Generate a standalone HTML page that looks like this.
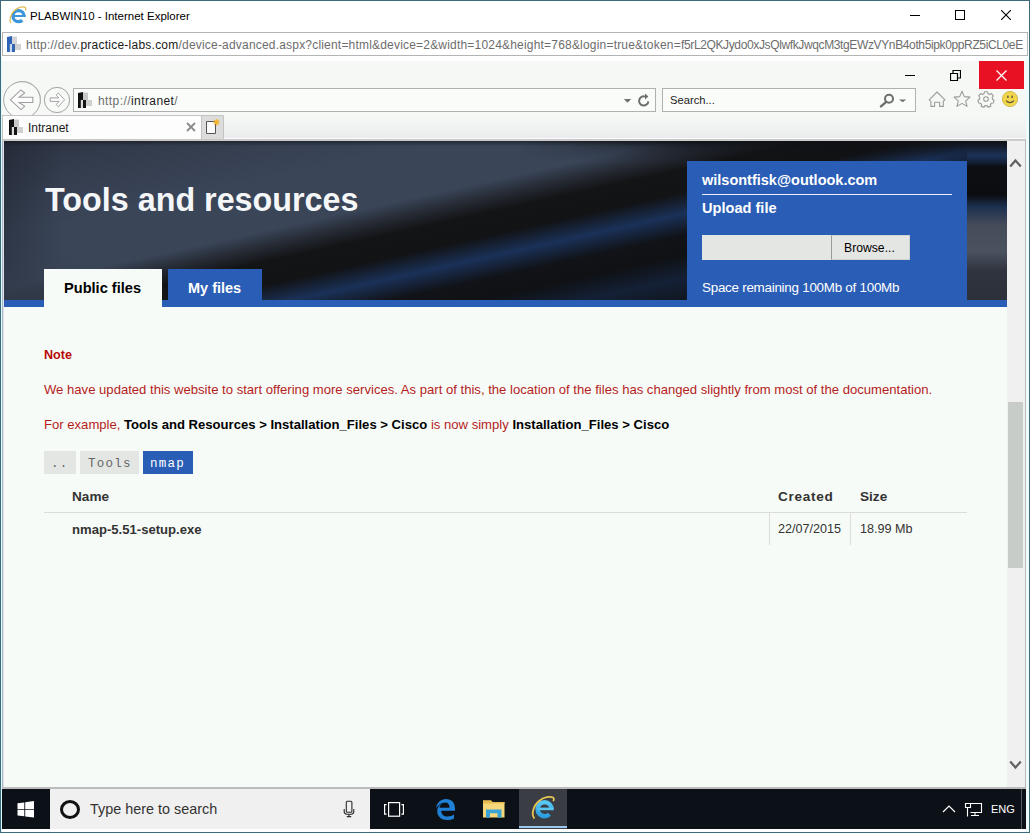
<!DOCTYPE html>
<html><head><meta charset="utf-8">
<style>
*{margin:0;padding:0;box-sizing:border-box}
html,body{width:1030px;height:833px;overflow:hidden;background:#ffffff;font-family:"Liberation Sans",sans-serif}
.a{position:absolute}
.t{position:absolute;white-space:nowrap;line-height:1}
</style></head><body>
<div class="a" style="left:0;top:0;width:1030px;height:833px;background:#fff">

<!-- outer frame -->
<div class="a" style="left:0;top:0;width:1030px;height:1px;background:#3f6a7c"></div>
<div class="a" style="left:0;top:0;width:1px;height:833px;background:#3f6a7c"></div>
<div class="a" style="left:1029px;top:0;width:1px;height:833px;background:#3f6a7c"></div>
<div class="a" style="left:0;top:832px;width:1030px;height:1px;background:#3f6a7c"></div>

<div class="a" style="left:1026px;top:57px;width:3px;height:775px;background:#eefcfd"></div>
<div class="a" style="left:1px;top:57px;width:1px;height:775px;background:#dcfafc"></div>
<!-- title bar -->
<div class="t" style="left:30px;top:11px;font-size:11.5px;color:#000">PLABWIN10 - Internet Explorer</div>

<!-- outer address bar -->
<div class="a" style="left:2px;top:32px;width:1026px;height:24px;border:1px solid #b4b4b4;background:#fff"></div>
<div class="t" style="left:26px;top:39px;font-size:12px;letter-spacing:0.238px;color:#6d6d6d">http://dev.<span style="color:#1a1a1a">practice-labs.com</span></div>
<div class="t" style="left:178.5px;top:39px;font-size:12px;letter-spacing:0.195px;color:#6d6d6d">/device-advanced.aspx?client=html&amp;device=2&amp;width=1024&amp;height=768&amp;login=true&amp;token=</div>
<div class="t" style="left:681px;top:39px;font-size:12px;letter-spacing:-0.37px;color:#6d6d6d">f5rL2QKJydo0xJsQlwfkJwqcM3tgEWzVYnB4oth5ipk0ppRZ5iCL0eE</div>

<!-- IE inner chrome -->
<div class="a" style="left:2px;top:57px;width:1024px;height:84px;background:linear-gradient(#ffffff 0,#ffffff 3px,#f5f8f5 5px,#f5f8f5 60px,#ebebed 81px)"></div>

<!-- window buttons -->
<div class="a" style="left:979px;top:61px;width:45px;height:28px;background:#e81123"></div>

<!-- nav -->
<div class="a" style="left:4px;top:81px;width:37px;height:37px;border:1px solid #b8b8b8;border-radius:50%"></div>
<div class="a" style="left:44px;top:87px;width:26px;height:26px;border:1px solid #b8b8b8;border-radius:50%"></div>
<div class="a" style="left:73px;top:88px;width:583px;height:24px;border:1px solid #b0b0b0;background:#fafcfa"></div>
<div class="t" style="left:98px;top:95px;font-size:12px;letter-spacing:0.42px;color:#6d6d6d">http://<span style="color:#1a1a1a">intranet</span>/</div>
<div class="a" style="left:662px;top:88px;width:254px;height:24px;border:1px solid #b0b0b0;background:#fafcfa"></div>
<div class="t" style="left:670px;top:95px;font-size:11.2px;color:#1a1a1a">Search...</div>

<!-- tab -->
<div class="a" style="left:2px;top:115px;width:200px;height:24px;border:1px solid #c4c4c4;border-bottom:none;background:#fcfdfc;z-index:2"></div>
<div class="t" style="left:28px;top:122px;font-size:12px;color:#1a1a1a;z-index:3">Intranet</div>
<div class="a" style="left:201px;top:115px;width:23px;height:24px;border:1px solid #c4c4c4;border-bottom:none;background:#dcdcdc"></div>
<div class="a" style="left:224px;top:138px;width:801px;height:1px;background:#fcfcfc"></div>
<div class="a" style="left:2px;top:139px;width:1024px;height:2px;background:linear-gradient(#c4c4c4,#d0d0d0)"></div>

<!-- content -->
<div class="a" style="left:4px;top:141px;width:1003px;height:646px;background:#f7fbf7"></div>

<div class="a" style="left:2px;top:141px;width:1px;height:646px;background:#aab9c8"></div>
<div class="a" style="left:3px;top:141px;width:1px;height:646px;background:#dfe2ec"></div>
<!-- header -->
<div class="a" style="left:4px;top:141px;width:1003px;height:166px;background:radial-gradient(ellipse 150px 55px at 20px 166px,rgba(54,63,80,0.9),rgba(54,63,80,0)),linear-gradient(to right,rgba(18,22,30,0.3) 0,rgba(18,22,30,0) 60px),linear-gradient(167.5deg,#2c3343 0%,#343d4e 12%,#3a4558 25%,#3a4558 38%,#262b35 42%,#131416 46%,#121315 52%,#1a3158 57.5%,#111318 63%,#0f1114 68%,#142036 74%,#101318 82%,#121418 100%)"></div>
<div class="a" style="left:967px;top:141px;width:40px;height:160px;background:linear-gradient(to bottom,#1c2230 0,#1f3b68 14px,#0c0e12 26px,#0b0d11 54px,#1c3050 66px,#444b59 84px,#4a5260 110px,#30343e 130px,#2c3039 160px)"></div>
<div class="a" style="left:4px;top:141px;width:1003px;height:5px;background:linear-gradient(to bottom,rgba(20,22,28,0.6) 0,rgba(20,22,28,0) 5px)"></div>
<div class="a" style="left:520px;top:141px;width:487px;height:20px;background:linear-gradient(to bottom,rgba(14,16,20,0.8) 0,rgba(14,16,20,0.4) 8px,rgba(14,16,20,0) 20px);-webkit-mask-image:linear-gradient(to right,transparent 0,#000 160px)"></div>
<div class="a" style="left:4px;top:300px;width:1003px;height:7px;background:#2a5db5"></div>
<div class="t" style="left:45px;top:184px;font-size:32.3px;font-weight:bold;color:#f4f6f8">Tools and resources</div>

<div class="a" style="left:44px;top:269px;width:118px;height:38px;background:#f7fbf7"></div>
<div class="t" style="left:64px;top:281px;font-size:14.6px;font-weight:bold;color:#000">Public files</div>
<div class="a" style="left:168px;top:269px;width:94px;height:32px;background:#2a5db5"></div>
<div class="t" style="left:188px;top:281px;font-size:14.5px;font-weight:bold;color:#fff">My files</div>

<!-- upload panel -->
<div class="a" style="left:687px;top:161px;width:280px;height:140px;background:#2a5db5"></div>
<div class="t" style="left:702px;top:173px;font-size:14.5px;font-weight:bold;color:#fff">wilsontfisk@outlook.com</div>
<div class="a" style="left:702px;top:194px;width:250px;height:1px;background:#e8eef8"></div>
<div class="t" style="left:702px;top:201px;font-size:14.6px;font-weight:bold;color:#fff">Upload file</div>
<div class="a" style="left:702px;top:235px;width:130px;height:25px;background:#e4e6e4"></div>
<div class="a" style="left:831px;top:235px;width:79px;height:25px;background:#e4e6e4;border:1px solid #d0d4d0;border-left:1px solid #9a9a9a"></div>
<div class="t" style="left:844px;top:242px;font-size:12.2px;color:#000">Browse...</div>
<div class="t" style="left:702px;top:281px;font-size:13.4px;letter-spacing:-0.25px;color:#fff">Space remaining 100Mb of 100Mb</div>

<!-- body text -->
<div class="t" style="left:44px;top:349px;font-size:12.6px;font-weight:bold;color:#b80808">Note</div>
<div class="t" style="left:44px;top:383px;font-size:13.1px;color:#b51d1d">We have updated this website to start offering more services. As part of this, the location of the files has changed slightly from most of the documentation.</div>
<div class="t" style="left:44px;top:418px;font-size:13.1px;color:#b51d1d">For example, <b style="color:#000">Tools and Resources &gt; Installation_Files &gt; Cisco</b> is now simply <b style="color:#000">Installation_Files &gt; Cisco</b></div>

<!-- breadcrumb -->
<div class="a" style="left:44px;top:451px;width:32px;height:23px;background:#e4e6e4"></div>
<div class="t" style="left:51px;top:458px;font-family:'Liberation Mono',monospace;font-size:12.5px;letter-spacing:1.26px;color:#666">..</div>
<div class="a" style="left:80px;top:451px;width:59px;height:23px;background:#e4e6e4"></div>
<div class="t" style="left:88px;top:458px;font-family:'Liberation Mono',monospace;font-size:12.5px;letter-spacing:1.26px;color:#666">Tools</div>
<div class="a" style="left:143px;top:451px;width:50px;height:23px;background:#2a5db5"></div>
<div class="t" style="left:150px;top:458px;font-family:'Liberation Mono',monospace;font-size:12.5px;letter-spacing:1.26px;color:#fff">nmap</div>

<!-- table -->
<div class="t" style="left:72px;top:490px;font-size:13.6px;font-weight:bold;color:#333">Name</div>
<div class="t" style="left:778px;top:490px;font-size:13.6px;font-weight:bold;color:#333;letter-spacing:0.7px">Created</div>
<div class="t" style="left:860px;top:490px;font-size:13.6px;font-weight:bold;color:#333">Size</div>
<div class="a" style="left:44px;top:512px;width:923px;height:1px;background:#dcdcdc"></div>
<div class="a" style="left:769px;top:513px;width:1px;height:32px;background:#dcdcdc"></div>
<div class="a" style="left:850px;top:513px;width:1px;height:32px;background:#dcdcdc"></div>
<div class="t" style="left:72px;top:523px;font-size:13.1px;font-weight:bold;color:#333">nmap-5.51-setup.exe</div>
<div class="t" style="left:778px;top:523px;font-size:12.6px;color:#333">22/07/2015</div>
<div class="t" style="left:860px;top:523px;font-size:12.6px;color:#333">18.99 Mb</div>

<!-- scrollbar -->
<div class="a" style="left:1007px;top:141px;width:18px;height:646px;background:#f0f0f0"></div>
<div class="a" style="left:1025px;top:141px;width:1px;height:646px;background:#b8b8b8"></div>
<div class="a" style="left:1008px;top:402px;width:15px;height:166px;background:#c8ccc8"></div>
<div class="a" style="left:2px;top:787px;width:1024px;height:2px;background:#bcbcbc"></div>

<!-- taskbar -->
<div class="a" style="left:2px;top:789px;width:1024px;height:40px;background:#0c1118"></div>
<div class="a" style="left:50px;top:789px;width:320px;height:40px;background:#f0f0f0"></div>
<div class="a" style="left:60px;top:800px;width:20px;height:19px;border:3px solid #111;border-radius:50%"></div>
<div class="t" style="left:90px;top:802px;font-size:14.4px;color:#333">Type here to search</div>
<div class="a" style="left:519px;top:789px;width:48px;height:40px;background:#3a3e44"></div>
<div class="a" style="left:519px;top:826px;width:48px;height:2px;background:#9ac8ee"></div>
<div class="t" style="left:991px;top:804px;font-size:11px;color:#fff">ENG</div>
<div class="a" style="left:1021px;top:789px;width:1px;height:40px;background:#5a5e64"></div>

<!-- ICONS -->
<!-- IE title icon -->
<svg class="a" style="left:7px;top:5px" width="20.5" height="20.5" viewBox="0 0 26 26">
 <circle cx="14.6" cy="14.2" r="7" fill="none" stroke="#3d95d9" stroke-width="4.2" stroke-dasharray="38.4 5.6" stroke-dashoffset="-5.6"/>
 <rect x="8.5" y="12.7" width="15.2" height="2.5" fill="#3d95d9"/>
 <path d="M5 23C2.5 19.5 4 12 9.5 7C14.5 2.5 20.5 1.5 23 3C24.5 4 24 5.8 23 6.8" stroke="#e0bd55" stroke-width="1.6" fill="none"/>
</svg>
<!-- title window controls -->
<div class="a" style="left:910px;top:15px;width:10px;height:1px;background:#000"></div>
<div class="a" style="left:955px;top:10px;width:10px;height:10px;border:1px solid #000"></div>
<svg class="a" style="left:1001px;top:10px" width="10" height="10" viewBox="0 0 10 10"><path d="M0 0L10 10M10 0L0 10" stroke="#000" stroke-width="1.1"/></svg>

<!-- favicon outer url -->
<svg class="a" style="left:7px;top:36px" width="14" height="16" viewBox="0 0 14 16">
 <path d="M0 1L5 0V8H5V16H0Z" fill="#2f63b8"/>
 <rect x="2.8" y="8" width="2.2" height="8" fill="#c8d6ee"/>
 <rect x="5" y="0.6" width="5" height="7.4" fill="#d4d4d8"/>
 <rect x="5" y="8" width="3" height="8" fill="#3566b2"/>
 <rect x="8" y="8" width="6" height="6" fill="#d2d2d2"/>
</svg>

<!-- inner window controls -->
<div class="a" style="left:905px;top:75px;width:10px;height:1px;background:#000"></div>
<svg class="a" style="left:950px;top:70px" width="11" height="11" viewBox="0 0 11 11"><path d="M0.5 3.5H7.5V10.5H0.5Z M3 3.5V0.5H10.5V8H7.5" fill="none" stroke="#000" stroke-width="1.2"/></svg>
<svg class="a" style="left:996px;top:70px" width="11" height="11" viewBox="0 0 11 11"><path d="M0.5 0.5L10.5 10.5M10.5 0.5L0.5 10.5" stroke="#fff" stroke-width="1.3"/></svg>

<!-- back / forward -->
<svg class="a" style="left:0px;top:78px" width="75" height="40" viewBox="0 0 75 40">
 <circle cx="22" cy="22" r="18.3" fill="#f8faf8" stroke="#a9a9a9" stroke-width="1"/>
 <path d="M10.4 21.8L20.9 11.9L24.7 15L19.1 19.2H32.8V24.5H19.1L24.7 28.4L20.9 31.6Z" fill="#fbfcfb" stroke="#a0a0a0" stroke-width="1.1" stroke-linejoin="miter"/>
 <circle cx="57" cy="22" r="12.6" fill="#f8faf8" stroke="#a9a9a9" stroke-width="1"/>
 <path d="M64.6 21.7L58.3 15L56.2 17.1L59 19.9H50.2V23.4H59L56.2 26.6L58.3 28.7Z" fill="#fbfcfb" stroke="#a4a4a4" stroke-width="1"/>
</svg>

<!-- favicon intranet (address) -->
<svg class="a" style="left:78px;top:92px" width="14" height="16" viewBox="0 0 14 16">
 <path d="M0 1L5 0V16H0Z" fill="#111"/>
 <rect x="2.8" y="8" width="2.2" height="8" fill="#ddd"/>
 <rect x="5" y="0.6" width="5" height="7.4" fill="#c8c8c8"/>
 <rect x="5" y="8" width="3" height="8" fill="#161616"/>
 <rect x="8" y="8" width="6" height="6" fill="#d0d0d0"/>
</svg>
<!-- dropdown & refresh -->
<svg class="a" style="left:623px;top:98px" width="9" height="6" viewBox="0 0 9 6"><path d="M0.8 1H8.2L4.5 4.8Z" fill="#707070"/></svg>
<svg class="a" style="left:637px;top:92px" width="14" height="16" viewBox="0 0 14 16">
 <path d="M11.3 9.3A4.6 4.6 0 1 1 8.2 4.6" fill="none" stroke="#6e6e6e" stroke-width="2"/>
 <path d="M8 1.6L11.4 4.6L8 7.6Z" fill="#6e6e6e"/>
</svg>
<!-- magnifier & dropdown -->
<svg class="a" style="left:878px;top:92px" width="30" height="16" viewBox="0 0 30 16">
 <circle cx="11" cy="6.8" r="4" fill="none" stroke="#6e6e6e" stroke-width="2"/>
 <path d="M8.2 9.8L3 14.4" stroke="#6e6e6e" stroke-width="2.4" stroke-linecap="round"/>
 <path d="M21 7.4H28.3L24.65 10.2Z" fill="#707070"/>
</svg>
<!-- home star gear smiley -->
<svg class="a" style="left:928px;top:90px" width="92" height="18" viewBox="0 0 92 18">
 <path d="M9 2L17 9.8L15.3 11.2V16.4H11.6V12.2H6.6V16.4H2.9V11.2L1.2 9.8Z" fill="none" stroke="#9c9c9c" stroke-width="1.1" stroke-linejoin="round"/>
 <path d="M34 1.3L36.3 6.6L42 7.1L37.7 10.8L39 16.4L34 13.4L29 16.4L30.3 10.8L26 7.1L31.7 6.6Z" fill="none" stroke="#9a9a9a" stroke-width="1.1" stroke-linejoin="round"/>
 <g transform="translate(58 9)" fill="none" stroke="#9a9a9a" stroke-width="1.1">
  <circle r="2.3"/>
  <path d="M-1.5 -7.2H1.5L2 -5.2L3.6 -4.4L5.4 -5.4L7.3 -3.2L6.2 -1.5L6.5 0.3L8 1.3L7.4 4L5.5 4.2L4.4 5.7L4.8 7.4L2 8.1L1 6.6L-1 6.6L-2 8.1L-4.8 7.4L-4.4 5.7L-5.5 4.2L-7.4 4L-8 1.3L-6.5 0.3L-6.2 -1.5L-7.3 -3.2L-5.4 -5.4L-3.6 -4.4L-2 -5.2Z" stroke-linejoin="round"/>
 </g>
 <circle cx="82" cy="9" r="7.6" fill="#f1d64c" stroke="#cdb447" stroke-width="0.9"/>
 <rect x="79.2" y="5.4" width="1.4" height="2.6" rx="0.6" fill="#5a5030"/>
 <rect x="83.4" y="5.4" width="1.4" height="2.6" rx="0.6" fill="#5a5030"/>
 <path d="M78 10.6Q82 14.6 86 10.6" fill="none" stroke="#5a5030" stroke-width="1.1"/>
</svg>

<!-- tab favicon -->
<svg class="a" style="left:9px;top:119px;z-index:3" width="14" height="16" viewBox="0 0 14 16">
 <path d="M0 1L5 0V16H0Z" fill="#111"/>
 <rect x="2.8" y="8" width="2.2" height="8" fill="#ddd"/>
 <rect x="5" y="0.6" width="5" height="7.4" fill="#c8c8c8"/>
 <rect x="5" y="8" width="3" height="8" fill="#161616"/>
 <rect x="8" y="8" width="6" height="6" fill="#d0d0d0"/>
</svg>
<!-- tab close -->
<svg class="a" style="left:186px;top:122px;z-index:3" width="10" height="10" viewBox="0 0 10 10"><path d="M1 1L9 9M9 1L1 9" stroke="#8a8a8a" stroke-width="1.8"/></svg>
<!-- new tab icon -->
<svg class="a" style="left:204px;top:117px" width="18" height="19" viewBox="0 0 18 19">
 <path d="M2.5 4.5H11.5V16.5H2.5Z" fill="#fafafa" stroke="#555" stroke-width="1"/>
 <g stroke="#f2b531" stroke-width="1.2"><path d="M12.5 2V8.5M9.3 5.2H15.7M10.2 2.9L14.8 7.5M14.8 2.9L10.2 7.5"/></g>
</svg>

<!-- scrollbar arrows -->
<svg class="a" style="left:1009px;top:157px" width="13" height="11" viewBox="0 0 13 11"><path d="M1.2 9.5L6.5 3.5L11.8 9.5" fill="none" stroke="#606060" stroke-width="2.2"/></svg>
<svg class="a" style="left:1009px;top:760px" width="13" height="11" viewBox="0 0 13 11"><path d="M1.2 1.5L6.5 7.5L11.8 1.5" fill="none" stroke="#606060" stroke-width="2.2"/></svg>

<!-- taskbar icons -->
<svg class="a" style="left:17px;top:801px" width="18" height="17" viewBox="0 0 18 17">
 <path d="M0.5 2.3L7.3 1.4V7.9H0.5Z M8.2 1.3L17 0.1V7.9H8.2Z M0.5 8.8H7.3V15.3L0.5 14.4Z M8.2 8.8H17V16.6L8.2 15.4Z" fill="#fff"/>
</svg>
<svg class="a" style="left:342px;top:800px" width="14" height="18" viewBox="0 0 14 18">
 <rect x="4.3" y="1.2" width="5.6" height="11" rx="1" fill="none" stroke="#2a2a2a" stroke-width="1.1"/>
 <path d="M2.2 9V11.6Q2.2 14.2 4.8 14.2H9.2Q11.8 14.2 11.8 11.6V9M7 14.2V16.6M4.8 16.6H9.2" fill="none" stroke="#2a2a2a" stroke-width="1.1"/>
</svg>
<svg class="a" style="left:383px;top:801px" width="22" height="17" viewBox="0 0 22 17">
 <rect x="5.6" y="1.6" width="11" height="13.6" fill="none" stroke="#fff" stroke-width="1.2"/>
 <path d="M3.6 3.6H1.6V13.2H3.6M18.4 3.6H20.4V13.2H18.4" fill="none" stroke="#fff" stroke-width="1.2"/>
</svg>
<svg class="a" style="left:433px;top:797px" width="24" height="24" viewBox="0 0 24 24">
 <path d="M3 11.5C3.6 5.6 8 2 13 2C18.6 2 22 5.8 22 11.6V13.8H8.2C8.3 17.6 11 19.6 14.5 19.6C17 19.6 19.3 18.8 21 17.6V21.4C19 22.5 16.6 23 14 23C8.6 23 4.2 19.6 4.2 14C4.2 10.6 6.2 7.8 9 6.6C7.4 8 6.6 9.6 6.5 10.8H16.5C16.5 7.6 15 5.6 12.4 5.6C8.4 5.6 4.6 8.6 3 11.5Z" fill="#1f80d6"/>
</svg>
<svg class="a" style="left:482px;top:799px" width="24" height="20" viewBox="0 0 24 20">
 <path d="M1 1.5H9L10.5 3H22.5V18.5H1Z" fill="#f6d87a"/>
 <path d="M1 1.5H9L10.5 3H22.5V4.5H1Z" fill="#e8b94c"/>
 <path d="M4 18.5V10.5H19.5V18.5H15.5V14.2H8V18.5Z" fill="#3aa3d8"/>
</svg>
<svg class="a" style="left:530px;top:795px" width="26" height="26" viewBox="0 0 26 26">
 <defs><linearGradient id="ieg" x1="0" y1="0" x2="0" y2="1"><stop offset="0" stop-color="#58c8f4"/><stop offset="1" stop-color="#2a9ee0"/></linearGradient></defs>
 <circle cx="14.6" cy="14.2" r="7" fill="none" stroke="url(#ieg)" stroke-width="4.4" stroke-dasharray="38.4 5.6" stroke-dashoffset="-5.6"/>
 <rect x="8.5" y="12.6" width="15.2" height="2.6" fill="#5cc6f2"/>
 <path d="M4.5 23.5C1 20 3 11 9 6C14 2 20 1 23 2.5C24.5 3.5 24 5 23 6" stroke="#e6c552" stroke-width="1.8" fill="none"/>
</svg>
<svg class="a" style="left:942px;top:804px" width="14" height="9" viewBox="0 0 14 9"><path d="M1 8L7 2L13 8" fill="none" stroke="#fff" stroke-width="1.2"/></svg>
<svg class="a" style="left:964px;top:802px" width="19" height="15" viewBox="0 0 19 15">
 <path d="M6.5 1.5H17.5V10.5H6.5" fill="none" stroke="#fff" stroke-width="1.1"/>
 <path d="M1.5 1.5H6.5V5.5H1.5Z" fill="none" stroke="#fff" stroke-width="1.1"/>
 <path d="M3.5 5.5V14.5M7 13.5H15M11 10.5V13.5" fill="none" stroke="#fff" stroke-width="1.1"/>
</svg>

</div>
</body></html>
